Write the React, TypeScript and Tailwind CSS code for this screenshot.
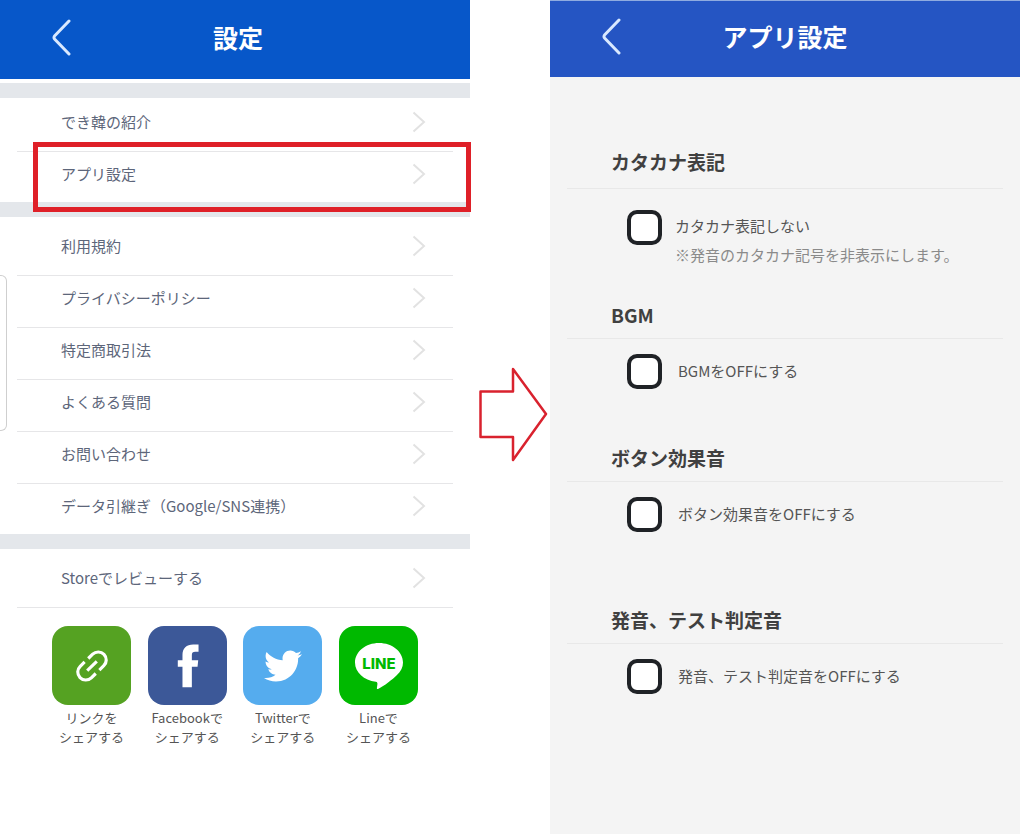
import React from 'react';
import { FaTwitter } from 'react-icons/fa';
import clsx from 'clsx';

const menuSections = [
    {
        className: 'pt-[2px]',
        items: [{ label: 'でき韓の紹介' }, { label: 'アプリ設定', highlighted: true }],
    },
    {
        className: 'pt-[7px]',
        items: [
            { label: '利用規約' },
            { label: 'プライバシーポリシー' },
            { label: '特定商取引法' },
            { label: 'よくある質問' },
            { label: 'お問い合わせ' },
            { label: 'データ引継ぎ（Google/SNS連携）' },
        ],
    },
];

const optionGroups = [
    { id: 'katakana', title: 'カタカナ表記', label: 'カタカナ表記しない', note: '※発音のカタカナ記号を非表示にします。' },
    { id: 'bgm', title: 'BGM', label: 'BGMをOFFにする', className: 'mt-[34px]' },
    { id: 'button-sound', title: 'ボタン効果音', label: 'ボタン効果音をOFFにする', className: 'mt-[55px]' },
    { id: 'judge-sound', title: '発音、テスト判定音', label: '発音、テスト判定音をOFFにする', className: 'mt-[74px]' },
];

export default function App() {
    return (
        <div className="relative flex min-h-screen bg-white pr-1 font-['Noto_Sans_CJK_JP',sans-serif]">
            <SettingsScreen />
            <div className="flex w-20 shrink-0 items-start justify-end pt-[366px]">
                <StepArrow />
            </div>
            <AppSettingsScreen />
        </div>
    );
}

const SettingsScreen = () => (
    <section className="min-w-0 flex-1">
        <ScreenHeader title="設定" className="h-[79px] bg-[#0757c9] pr-[74px] pb-[5px]" />
        <main className="pt-1">
            {menuSections.map((section, i) => (
                <div key={i}>
                    <Band />
                    <ul className={clsx('px-[17px]', section.className)}>
                        {section.items.map((item, j) => (
                            <MenuRow key={item.label} {...item} last={j === section.items.length - 1} />
                        ))}
                    </ul>
                </div>
            ))}
            <Band />
            <ul className="px-[17px] pt-[7px]">
                <MenuRow label="Storeでレビューする" />
            </ul>
            <ShareButtons />
        </main>
        {/* Edge panel handle */}
        <div className="absolute top-[275px] left-0 h-[156px] w-[7px] rounded-r-md border border-l-0 border-[#cfcfcf] bg-white" />
    </section>
);

const ScreenHeader = ({ title, className }: { title: string; className: string }) => (
    <header className={clsx('flex items-center', className)}>
        <button type="button" aria-label="戻る" className="flex w-20 shrink-0 justify-end pr-[9px]">
            <svg width="20" height="38" viewBox="0 0 20 38" fill="none" stroke="#d9e9ff" strokeWidth="3" strokeLinecap="round" strokeLinejoin="round">
                <path d="M18 3 3.500 18Q2.500 19.500 3.500 21L18 36" />
            </svg>
        </button>
        <h1 className="flex-1 text-center text-[25px] leading-9 font-bold text-white">{title}</h1>
    </header>
);

const Band = () => <div className="h-[15px] bg-[#e4e7eb]" />;

const MenuRow = ({ label, highlighted, last }: { label: string; highlighted?: boolean; last?: boolean }) => (
    <li className={clsx('relative', last ? 'pb-[6px]' : 'border-b border-[#e6e6e8] pb-[7px]')}>
        <a href="#" className="flex h-11 items-center justify-between pr-[27px] pl-11 text-[15px] text-[#5d667a]">
            {label}
            <svg width="14" height="22" viewBox="0 0 14 22" fill="none" stroke="#e2e2e2" strokeWidth="2">
                <path d="M1.500 1.500 12 11 1.500 20.500" />
            </svg>
        </a>
        {highlighted && (
            <div className="pointer-events-none absolute -top-[10px] -right-[18px] -bottom-[10px] left-4 z-10 border-[5px] border-[#df2028]" />
        )}
    </li>
);

const ShareButtons = () => (
    <div className="flex justify-between px-[52px] pt-[18px]">
        <ShareButton service="リンクを" className="bg-[#55a222]">
            <svg width="40" height="40" viewBox="0 0 24 24" fill="none" stroke="white" strokeWidth="1.900">
                <g transform="rotate(-44 12 12)">
                    <path d="M10.500 16.800H6.800a4.800 4.800 0 0 1 0-9.600h3.700" />
                    <path d="M13.500 7.200h3.700a4.800 4.800 0 0 1 0 9.600h-3.700" />
                    <path d="M8 12h8" />
                </g>
            </svg>
        </ShareButton>
        <ShareButton service="Facebookで" className="bg-[#3c5898]">
            <svg width="79" height="79" viewBox="0 0 236 236" fill="white">
                <path d="M103 183V122H89V102H103V87C103 66 115 55 135 55H151V77H141C134 77 131 80 131 87V102H150L148 122H131V183Z" />
            </svg>
        </ShareButton>
        <ShareButton service="Twitterで" className="bg-[#55acee]">
            <FaTwitter size={38} color="white" />
        </ShareButton>
        <ShareButton service="Lineで" className="bg-[#00b900]">
            <svg width="79" height="79" viewBox="0 0 79 79">
                <path d="M40 17c13.300 0 24 8.700 24 19.500 0 4.800-2.200 9-6 12.500C53.500 53.500 45 60 39.500 62.800c-1.800.8-1.700-.5-1.500-1.600l.4-3c.1-1.100 0-2.100-1.600-2.400C25 54.200 16 46.500 16 36.500 16 25.700 26.700 17 40 17Z" fill="white" />
                <text x="40" y="43" textAnchor="middle" fill="#00b900" className="font-['Inter',sans-serif] text-[15px] font-extrabold">
                    LINE
                </text>
            </svg>
        </ShareButton>
    </div>
);

const ShareButton = ({ service, className, children }: { service: string; className: string; children: React.ReactNode }) => (
    <button type="button" className="flex w-[79px] flex-col items-center text-[13px] leading-[19px] text-[#555]">
        <span className={clsx('mb-[3px] flex size-[79px] items-center justify-center rounded-2xl', className)}>{children}</span>
        <span className="whitespace-nowrap">{service}</span>
        <span className="whitespace-nowrap">シェアする</span>
    </button>
);

const StepArrow = () => (
    <svg width="72" height="96" viewBox="0 0 72 96" fill="none" stroke="#d9222e" strokeWidth="2.500" strokeLinejoin="round">
        <path d="M2.500 25.500H35V3L68 48 35 94V71H2.500Z" />
    </svg>
);

const AppSettingsScreen = () => (
    <section className="min-w-0 flex-1 bg-[#f4f4f4]">
        <ScreenHeader title="アプリ設定" className="h-[77px] border-t border-[#8fabe0] bg-[#2555c3] pr-20 pb-[6px]" />
        <main className="px-[17px] pt-[71px]">
            {optionGroups.map((group) => (
                <OptionGroup key={group.id} {...group} />
            ))}
        </main>
    </section>
);

const OptionGroup = ({ id, title, label, note, className }: { id: string; title: string; label: string; note?: string; className?: string }) => (
    <div className={className}>
        <h2 className={clsx('border-b border-[#e8e8e8] pl-11 text-[19px] leading-7 font-bold text-[#404040]', note ? 'pb-3' : 'pb-[9px]')}>
            {title}
        </h2>
        <div className={clsx('flex items-start pl-[60px]', note ? 'gap-[13px] pt-[21px]' : 'gap-4 pt-[15px]')}>
            <input
                id={id}
                type="checkbox"
                className="size-[35px] shrink-0 appearance-none rounded-[10px] border-4 border-[#1f2226] bg-white checked:bg-[#2555c3]"
            />
            <div className="text-[15px]">
                <label htmlFor={id} className={clsx('block text-[#555]', note ? 'leading-8' : 'leading-[33px]')}>
                    {label}
                </label>
                {note && <p className="leading-[25px] whitespace-nowrap text-[#8a8a8a]">{note}</p>}
            </div>
        </div>
    </div>
);
